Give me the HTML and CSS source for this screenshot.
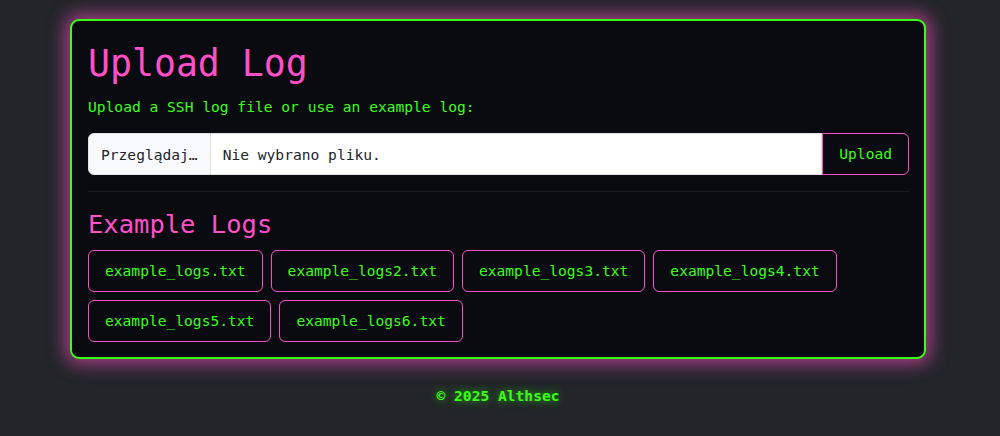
FILE: index.html
```html
<!DOCTYPE html>
<html lang="pl">
<head>
<meta charset="utf-8">
<title>Upload Log</title>
<link rel="stylesheet" href="styles.css">
</head>
<body>
<div class="page">
  <main class="card">
    <h1 class="title">Upload Log</h1>
    <p class="lead">Upload a SSH log file or use an example log:</p>
    <form class="upload-group">
      <label class="file-btn">Przeglądaj…</label>
      <span class="file-name">Nie wybrano pliku.</span>
      <button type="button" class="btn btn-upload">Upload</button>
    </form>
    <hr class="divider">
    <h3 class="subtitle">Example Logs</h3>
    <div class="examples">
      <button type="button" class="btn">example_logs.txt</button>
      <button type="button" class="btn">example_logs2.txt</button>
      <button type="button" class="btn">example_logs3.txt</button>
      <button type="button" class="btn">example_logs4.txt</button>
      <button type="button" class="btn">example_logs5.txt</button>
      <button type="button" class="btn">example_logs6.txt</button>
    </div>
  </main>
  <footer class="footer">© 2025 Althsec</footer>
</div>
</body>
</html>
```

FILE: styles.css
```css
* { box-sizing: border-box; }
html, body { margin: 0; padding: 0; }
body {
  background: #222529;
  font-family: "DejaVu Sans Mono", "Liberation Mono", monospace;
  font-size: 14.6px;
  color: #39ff14;
  height: 436px;
  overflow: hidden;
}
.page {
  padding: 19px 4px 0 0;
}
.card {
  width: 856px;
  margin: 0 auto;
  background: #0a0b10;
  border: 2px solid #39ff14;
  border-radius: 9px;
  padding: 15px 15px 15px 16px;
  box-shadow: 0 0 18px 5px rgba(255, 79, 200, 0.6);
}
.title {
  margin: 4px 0 0;
  font-weight: normal;
  font-size: 36.5px;
  line-height: 48px;
  color: #ff4fc8;
}
.lead {
  margin: 8px 0 15px;
  line-height: 22px;
  color: #39ff14;
}
.upload-group {
  display: flex;
  height: 42px;
  margin: 0;
}
.file-btn {
  display: flex;
  align-items: center;
  padding: 0 12px;
  background: #f8f9fa;
  color: #212529;
  border: 1px solid #dee2e6;
  border-radius: 6px 0 0 6px;
  white-space: nowrap;
}
.file-name {
  flex: 1;
  display: flex;
  align-items: center;
  padding: 0 12px;
  background: #fff;
  color: #212529;
  border: 1px solid #dee2e6;
  border-left: none;
}
.btn {
  font-family: inherit;
  font-size: 14.6px;
  line-height: 24px;
  color: #39ff14;
  background: #0a0b10;
  border: 1px solid #ff4fc8;
  border-radius: 6px;
  padding: 8px 16px;
  cursor: pointer;
}
.btn-upload {
  border-radius: 0 6px 6px 0;
  padding: 0 16px;
  height: 42px;
}
.divider {
  margin: 16px 0 0;
  border: 0;
  border-top: 1px solid #1b1d22;
}
.subtitle {
  margin: 16px 0 10px;
  font-weight: normal;
  font-size: 25.5px;
  line-height: 32px;
  color: #ff4fc8;
}
.examples {
  display: flex;
  flex-wrap: wrap;
  gap: 8px;
}
.footer {
  text-align: center;
  margin-top: 25px;
  font-weight: bold;
  line-height: 24px;
  color: #39ff14;
  text-shadow: 0 0 8px rgba(57, 255, 20, 0.7);
}
```
